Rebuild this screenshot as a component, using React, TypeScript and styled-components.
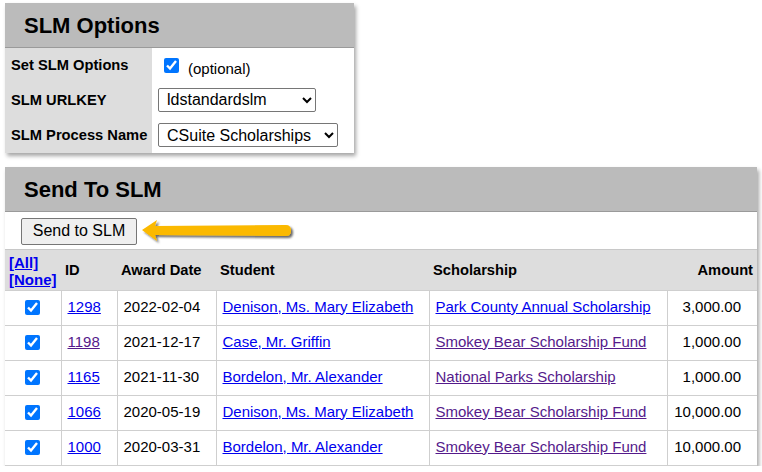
import React from "react";
import styled, { createGlobalStyle } from "styled-components";

const Global = createGlobalStyle`
  html, body { margin: 0; padding: 0; background: #fff; }
  body { font-family: "Liberation Sans", Arial, sans-serif; color: #000; }
  a { color: #0000ee; }
  a.visited { color: #551a8b; }
`;

const Page = styled.div`
  display: flex;
  flex-direction: column;
  align-items: flex-start;
  gap: 14px;
  padding: 3px 5px 0 5px;
`;

const Panel = styled.section<{ $width: number }>`
  width: ${(p) => p.$width}px;
  background: #fff;
  box-shadow: 2px 3px 4px rgba(0, 0, 0, 0.35);
`;

const PanelHeader = styled.h2`
  margin: 0;
  height: 45px;
  box-sizing: border-box;
  display: flex;
  align-items: center;
  padding: 2px 0 0 19px;
  background: #bbbbbb;
  border-bottom: 1px solid #9a9a9a;
  font-size: 22px;
  font-weight: bold;
`;

const OptTable = styled.table`
  width: 100%;
  border-collapse: collapse;
`;

const OptRow = styled.tr<{ $h: number }>`
  height: ${(p) => p.$h}px;
  & + & > td { border-top: 1px solid #cfcfcf; }
`;

const OptLabel = styled.td`
  width: 147px;
  box-sizing: border-box;
  padding: 0 0 0 6px;
  background: #dddddd;
  font-size: 14.7px;
  font-weight: bold;
`;

const OptValue = styled.td`
  padding: 0 0 0 6px;
  font-size: 15px;
`;

const CheckWrap = styled.span`
  display: inline-flex;
  align-items: flex-end;
  gap: 9px;
  padding: 1px 0 0 6px;
`;

const Optional = styled.span`
  position: relative;
  top: 4px;
`;

const Check = styled.input.attrs({ type: "checkbox", readOnly: true })`
  width: 15px;
  height: 15px;
  margin: 0;
  accent-color: #0075ff;
`;

const Select = styled.select<{ $w: number }>`
  width: ${(p) => p.$w}px;
  height: 24px;
  font-family: "Liberation Sans", Arial, sans-serif;
  font-size: 16px;
  color: #000;
  background: #fff;
  border: 1px solid #767676;
  border-radius: 2px;
  padding: 0 2px 0 4px;
`;

const ButtonBar = styled.div`
  height: 38px;
  box-sizing: border-box;
  display: flex;
  align-items: center;
  gap: 3px;
  padding: 1px 0 0 16px;
  border-bottom: 1px solid #c8c8c8;
`;

const Button = styled.button`
  width: 116px;
  height: 27px;
  font-family: "Liberation Sans", Arial, sans-serif;
  font-size: 16px;
  color: #000;
  background: #efefef;
  border: 1px solid #767676;
  border-radius: 2px;
  padding: 0;
`;

const DataTable = styled.table`
  width: 100%;
  border-collapse: collapse;
  table-layout: fixed;
`;

const HeadRow = styled.tr`
  height: 40px;
  background: #dddddd;
`;

const Th = styled.th<{ $align?: string; $w: number }>`
  box-sizing: border-box;
  width: ${(p) => p.$w}px;
  text-align: ${(p) => p.$align || "left"};
  font-size: 14.7px;
  font-weight: bold;
  padding: 0 4px 0 ${(p) => (p.$align === "right" ? 0 : 4)}px;
`;

const SelAll = styled.div`
  display: flex;
  flex-direction: column;
  font-size: 15px;
  line-height: 17px;
  padding-top: 2px;
  a { color: #0000ee; }
`;

const Row = styled.tr`
  height: 35px;
`;

const Td = styled.td<{ $align?: string; $pr?: number }>`
  box-sizing: border-box;
  border: 1px solid #cfcfcf;
  font-size: 15px;
  text-align: ${(p) => p.$align || "left"};
  padding: 0 ${(p) => p.$pr ?? 4}px 3px 6px;
  white-space: nowrap;
  overflow: hidden;
  &:first-child { border-left: none; }
  &:last-child { border-right: none; }
`;

const CheckCell = styled(Td)`
  text-align: center;
  padding: 3px 0 0 0;
`;

const Arrow = () => (
  <svg width="156" height="30" viewBox="0 0 156 30">
    <defs>
      <filter id="sh" x="-10%" y="-30%" width="120%" height="170%">
        <feDropShadow dx="2" dy="2" stdDeviation="1.2" floodColor="#000" floodOpacity="0.6" />
      </filter>
    </defs>
    <g filter="url(#sh)">
      <path
        d="M2 14 L17 4 L15 10 L146 9 Q151 9 151 14.5 Q151 20 146 20 L15 19 L17 25 Z"
        fill="#fbb900"
      />
    </g>
  </svg>
);

const rows = [
  { id: "1298", v: false, date: "2022-02-04", student: "Denison, Ms. Mary Elizabeth", sch: "Park County Annual Scholarship", sv: false, amt: "3,000.00" },
  { id: "1198", v: true, date: "2021-12-17", student: "Case, Mr. Griffin", sch: "Smokey Bear Scholarship Fund", sv: true, amt: "1,000.00" },
  { id: "1165", v: false, date: "2021-11-30", student: "Bordelon, Mr. Alexander", sch: "National Parks Scholarship", sv: true, amt: "1,000.00" },
  { id: "1066", v: false, date: "2020-05-19", student: "Denison, Ms. Mary Elizabeth", sch: "Smokey Bear Scholarship Fund", sv: true, amt: "10,000.00" },
  { id: "1000", v: false, date: "2020-03-31", student: "Bordelon, Mr. Alexander", sch: "Smokey Bear Scholarship Fund", sv: true, amt: "10,000.00" },
];

export default function App() {
  return (
    <>
      <Global />
      <Page>
        <Panel $width={349}>
          <PanelHeader>SLM Options</PanelHeader>
          <OptTable>
            <tbody>
              <OptRow $h={34}>
                <OptLabel>Set SLM Options</OptLabel>
                <OptValue>
                  <CheckWrap>
                    <Check checked />
                    <Optional>(optional)</Optional>
                  </CheckWrap>
                </OptValue>
              </OptRow>
              <OptRow $h={35}>
                <OptLabel>SLM URLKEY</OptLabel>
                <OptValue>
                  <Select $w={158} defaultValue="ldstandardslm">
                    <option>ldstandardslm</option>
                  </Select>
                </OptValue>
              </OptRow>
              <OptRow $h={36}>
                <OptLabel>SLM Process Name</OptLabel>
                <OptValue>
                  <Select $w={180} defaultValue="CSuite Scholarships">
                    <option>CSuite Scholarships</option>
                  </Select>
                </OptValue>
              </OptRow>
            </tbody>
          </OptTable>
        </Panel>

        <Panel $width={752}>
          <PanelHeader>Send To SLM</PanelHeader>
          <ButtonBar>
            <Button>Send to SLM</Button>
            <Arrow />
          </ButtonBar>
          <DataTable>
            <thead>
              <HeadRow>
                <Th $w={56}>
                  <SelAll>
                    <a href="#all">[All]</a>
                    <a href="#none">[None]</a>
                  </SelAll>
                </Th>
                <Th $w={56}>ID</Th>
                <Th $w={99}>Award Date</Th>
                <Th $w={213}>Student</Th>
                <Th $w={238}>Scholarship</Th>
                <Th $w={90} $align="right">Amount</Th>
              </HeadRow>
            </thead>
            <tbody>
              {rows.map((r) => (
                <Row key={r.id}>
                  <CheckCell>
                    <Check checked />
                  </CheckCell>
                  <Td>
                    <a href="#" className={r.v ? "visited" : undefined}>{r.id}</a>
                  </Td>
                  <Td>{r.date}</Td>
                  <Td>
                    <a href="#">{r.student}</a>
                  </Td>
                  <Td>
                    <a href="#" className={r.sv ? "visited" : undefined}>{r.sch}</a>
                  </Td>
                  <Td $align="right" $pr={16}>{r.amt}</Td>
                </Row>
              ))}
            </tbody>
          </DataTable>
        </Panel>
      </Page>
    </>
  );
}
